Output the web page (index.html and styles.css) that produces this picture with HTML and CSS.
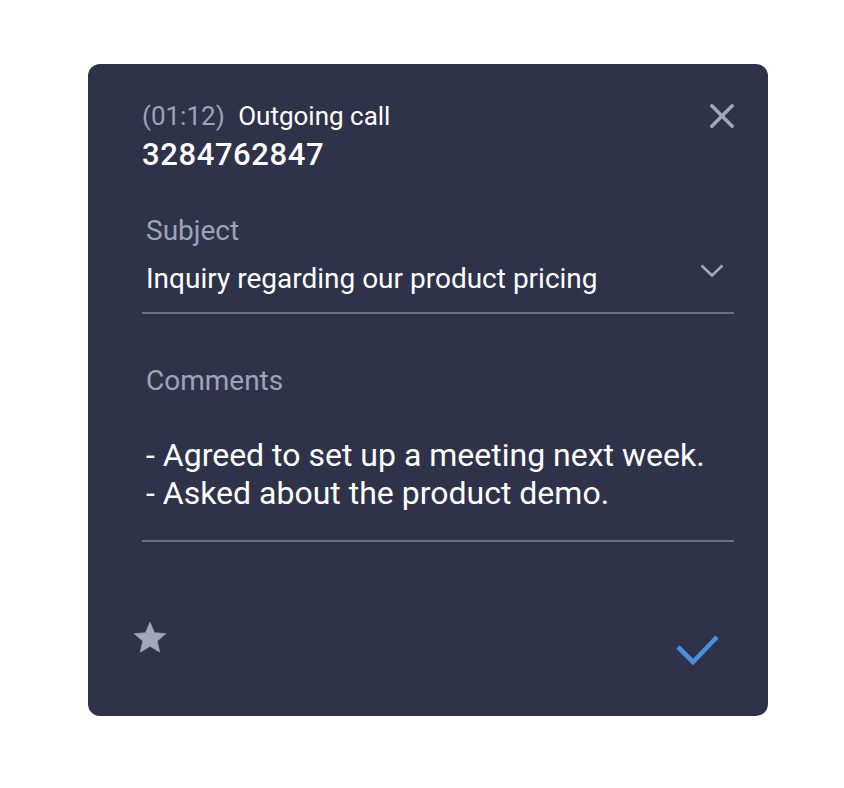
FILE: index.html
```html
<!DOCTYPE html>
<html lang="en">
  <head>
    <meta charset="UTF-8" />
    <meta name="viewport" content="width=device-width, initial-scale=1.0" />
    <title>Call log</title>
    <link rel="stylesheet" href="styles.css">
  </head>
  <body>
    <div class="card">
      <!-- Call header -->
      <div class="header">
        <div class="call-info">
          <div class="call-meta">
            <span class="duration">(01:12)</span>
            <span class="direction">Outgoing call</span>
          </div>
          <div class="number">3284762847</div>
        </div>
        <button class="close" aria-label="Close">
          <svg width="24" height="24" viewBox="0 0 24 24">
            <path d="M1.8 1.8 L22.2 22.2 M22.2 1.8 L1.8 22.2" stroke="#a3a7b9" stroke-width="3.4" stroke-linecap="round" fill="none" />
          </svg>
        </button>
      </div>

      <!-- Subject field -->
      <div class="field subject">
        <div class="field-label">Subject</div>
        <div class="select-row">
          <span class="field-value">Inquiry regarding our product pricing</span>
          <svg class="chevron" width="24" height="16" viewBox="0 0 24 16">
            <path d="M1.5 2.5 L12 12.5 L22.5 2.5" stroke="#a3a7b9" stroke-width="2.6" fill="none" />
          </svg>
        </div>
      </div>

      <!-- Comments field -->
      <div class="field comments">
        <div class="field-label">Comments</div>
        <div class="comment-text">
          - Agreed to set up a meeting next week.<br>
          - Asked about the product demo.
        </div>
      </div>

      <div class="footer">
        <button class="star" aria-label="Favourite">
          <svg width="38" height="38" viewBox="0 0 24 24">
            <path d="M12 17.27L18.18 21l-1.64-7.03L22 9.24l-7.19-.61L12 2 9.19 8.63 2 9.24l5.46 4.73L5.82 21z" fill="#a3a7b9" stroke="#a3a7b9" stroke-width="0.4" stroke-linejoin="round" />
          </svg>
        </button>
        <button class="save" aria-label="Save">
          <svg width="46" height="32" viewBox="0 0 46 32">
            <path d="M3 13 L18 28 L42 3" stroke="#4a90d9" stroke-width="4.6" fill="none" />
          </svg>
        </button>
      </div>
    </div>
  </body>
</html>
```

FILE: styles.css
```css
body {
  margin: 0;
  background: #ffffff;
  font-family: Roboto, "Noto Sans", sans-serif;
}

.card {
  width: 680px;
  height: 652px;
  box-sizing: border-box;
  margin: 64px 0 0 88px;
  background: #2e3349;
  border-radius: 12px;
  padding: 37px 34px 0 54px;
  display: flex;
  flex-direction: column;
}

button {
  background: none;
  border: none;
  padding: 0;
  cursor: pointer;
  display: flex;
}

.header {
  display: flex;
  justify-content: space-between;
  align-items: flex-start;
}

.call-meta {
  font-size: 26px;
  line-height: 30px;
  color: #ffffff;
}

.duration {
  color: #9ea3b6;
  margin-right: 7px;
}

.number {
  font-size: 31px;
  font-weight: 500;
  line-height: 48px;
  color: #ffffff;
  letter-spacing: 0.6px;
}

.close {
  margin-top: 3px;
}

.field {
  padding-left: 4px;
  border-bottom: 2px solid #6c7084;
}

.field-label {
  font-size: 28px;
  line-height: 34px;
  color: #9ea3b6;
}

.subject {
  margin-top: 35px;
}

.select-row {
  display: flex;
  justify-content: space-between;
  align-items: center;
  padding: 14px 10px 16px 0;
}

.field-value {
  font-size: 28px;
  line-height: 34px;
  color: #ffffff;
}

.chevron {
  margin-top: -16px;
}

.comments {
  margin-top: 50px;
}

.comment-text {
  font-size: 32px;
  line-height: 38px;
  color: #ffffff;
  padding: 38px 0 28px;
}

.footer {
  display: flex;
  justify-content: space-between;
  align-items: flex-start;
  margin-top: 77px;
  margin-left: -11px;
  padding-right: 13px;
}

.save {
  margin-top: 15px;
}
```
